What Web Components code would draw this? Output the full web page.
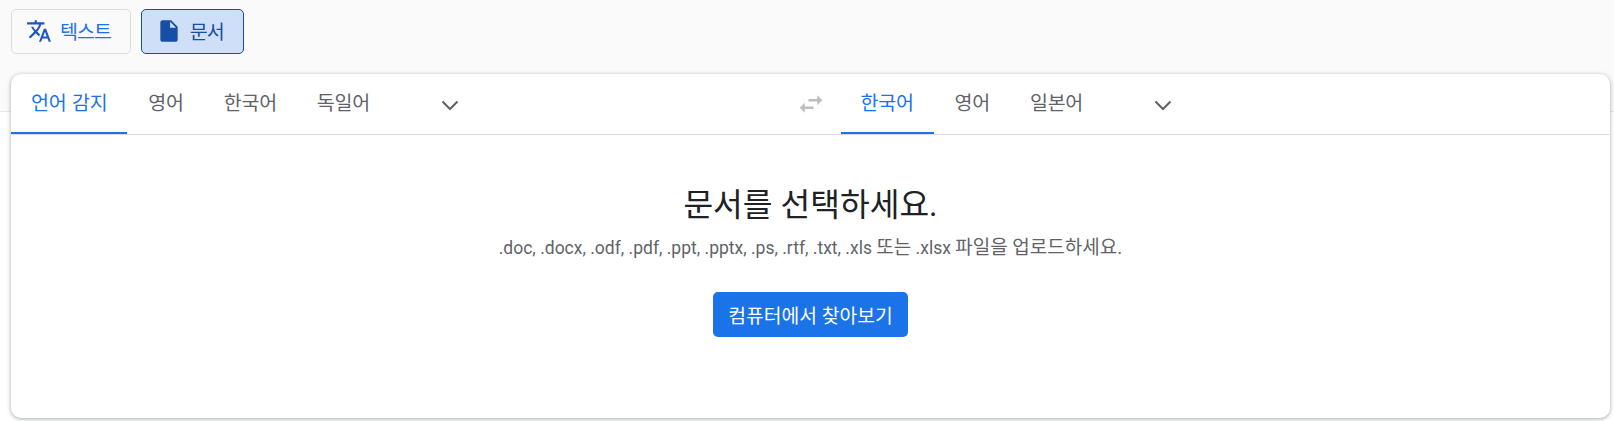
<!DOCTYPE html>
<html lang="ko">
<head>
<meta charset="utf-8">
<title>번역</title>
<style>
  html, body { margin: 0; height: 100%; background: #fff; }
  body { font-family: Roboto, "Noto Sans CJK KR", sans-serif; overflow: hidden; }
</style>
</head>
<body>
<mode-bar>
  <mode-button icon="translate">텍스트</mode-button>
  <mode-button icon="doc" active>문서</mode-button>
</mode-bar>
<translate-card>
  <lang-tabs slot="source">
    <lang-tab active>언어 감지</lang-tab>
    <lang-tab>영어</lang-tab>
    <lang-tab>한국어</lang-tab>
    <lang-tab>독일어</lang-tab>
  </lang-tabs>
  <lang-tabs slot="target">
    <lang-tab active>한국어</lang-tab>
    <lang-tab>영어</lang-tab>
    <lang-tab>일본어</lang-tab>
  </lang-tabs>
  <doc-picker></doc-picker>
</translate-card>

<script>
(function () {
  const ICONS = {
    translate: '<svg width="26" height="26" viewBox="0 0 24 24" fill="currentColor"><path d="M12.87 15.07l-2.54-2.51.03-.03c1.74-1.94 2.98-4.17 3.71-6.53H17V4h-7V2H8v2H1v1.99h11.17C11.5 7.92 10.44 9.75 9 11.35 8.07 10.32 7.3 9.19 6.69 8h-2c.73 1.63 1.73 3.17 2.98 4.56l-5.09 5.02L4 19l5-5 3.11 3.11.76-2.04zM18.5 10h-2L12 22h2l1.12-3h4.75L21 22h2l-4.5-12zm-2.62 7l1.62-4.33L19.12 17h-3.24z"/></svg>',
    doc: '<svg width="26" height="26" viewBox="0 0 24 24" fill="currentColor"><path d="M6 2c-1.1 0-2 .9-2 2v16c0 1.1.9 2 2 2h12c1.1 0 2-.9 2-2V8l-6-6H6zm7 7V3.5L18.5 9H13z"/></svg>'
  };

  class ModeBar extends HTMLElement {
    connectedCallback() {
      this.attachShadow({ mode: 'open' }).innerHTML = `
        <style>
          :host { display: flex; gap: 10px; height: 112px; box-sizing: border-box; padding: 9px 11px 0;
                  background: #fafafa; border-bottom: 1px solid #e8e8e8; align-items: flex-start; }
        </style>
        <slot></slot>`;
    }
  }

  class ModeButton extends HTMLElement {
    connectedCallback() {
      const active = this.hasAttribute('active');
      this.attachShadow({ mode: 'open' }).innerHTML = `
        <style>
          :host { display: flex; align-items: center; gap: 8px; height: 45px; box-sizing: border-box;
                  padding: 0 19px 2px 14px; border-radius: 5px; font-size: 19.5px; letter-spacing: -1px;
                  border: 1px solid ${active ? '#174ea6' : '#dadce0'};
                  background: ${active ? '#cfdff8' : '#fafafa'};
                  color: ${active ? '#174ea6' : '#1a73e8'}; }
          svg { display: block; }
          .icon { color: #1a56c4; }
          :host([active]) .icon { color: #174ea6; }
        </style>
        <span class="icon">${ICONS[this.getAttribute('icon')]}</span>
        <slot></slot>`;
    }
  }

  class TranslateCard extends HTMLElement {
    connectedCallback() {
      this.attachShadow({ mode: 'open' }).innerHTML = `
        <style>
          :host { display: block; position: absolute; left: 11px; top: 74px; width: 1599px; height: 344px;
                  background: #fff; border-radius: 10px;
                  box-shadow: 0 1px 4px 0 rgba(60,64,67,.45); }
          .head { display: grid; grid-template-columns: 1fr 60px 1fr; height: 61px; box-sizing: border-box;
                  border-bottom: 1px solid #dadce0; }
          .swap { display: flex; align-items: center; justify-content: center; color: #bdbdbd; padding-bottom: 1px; }
        </style>
        <div class="head">
          <slot name="source"></slot>
          <div class="swap">
            <svg width="30" height="30" viewBox="0 0 24 24" fill="currentColor"><path d="M6.99 11L3 15l3.99 4v-3H14v-2H6.99v-3zM21 9l-3.99-4v3H10v2h7.01v3L21 9z"/></svg>
          </div>
          <slot name="target"></slot>
        </div>
        <slot></slot>`;
    }
  }

  class LangTabs extends HTMLElement {
    connectedCallback() {
      this.attachShadow({ mode: 'open' }).innerHTML = `
        <style>
          :host { display: flex; height: 60px; }
          .more { display: flex; align-items: center; margin-left: 52px; color: #5f6368; padding-top: 3px; }
          svg { display: block; }
        </style>
        <slot></slot>
        <div class="more">
          <svg width="18" height="12" viewBox="0 0 18 12" fill="none" stroke="currentColor" stroke-width="2"><path d="M1.5 1.5L9 9l7.5-7.5"/></svg>
        </div>`;
    }
  }

  class LangTab extends HTMLElement {
    connectedCallback() {
      const active = this.hasAttribute('active');
      this.attachShadow({ mode: 'open' }).innerHTML = `
        <style>
          :host { display: flex; align-items: center; box-sizing: border-box; height: 60px;
                  padding: 0 ${active ? 20 : 19}px 3px ${active ? 20 : 21}px;
                  font-size: 19.5px; letter-spacing: -.25px; word-spacing: 1px;
                  color: ${active ? '#1a73e8' : '#5f6368'};
                  border-bottom: 2px solid ${active ? '#1a73e8' : 'transparent'}; }
        </style>
        <slot></slot>`;
    }
  }

  class DocPicker extends HTMLElement {
    connectedCallback() {
      this.attachShadow({ mode: 'open' }).innerHTML = `
        <style>
          :host { display: flex; flex-direction: column; align-items: center; padding-top: 48px; }
          h2 { margin: 0; font-size: 32.3px; font-weight: 400; line-height: 44px; color: #202124; }
          p { margin: 9px 0 0; font-size: 17.5px; line-height: 24px; color: #5f6368; }
          p span { font-size: 19px; }
          button { margin-top: 32px; width: 195px; height: 45px; border: 0; border-radius: 5px; padding: 0;
                   background: #1a73e8; color: #fff; font: inherit; font-size: 19.3px; }
        </style>
        <h2>문서를 선택하세요.</h2>
        <p>.doc, .docx, .odf, .pdf, .ppt, .pptx, .ps, .rtf, .txt, .xls <span>또는</span> .xlsx <span>파일을 업로드하세요.</span></p>
        <button>컴퓨터에서 찾아보기</button>`;
    }
  }

  customElements.define('mode-bar', ModeBar);
  customElements.define('mode-button', ModeButton);
  customElements.define('translate-card', TranslateCard);
  customElements.define('lang-tabs', LangTabs);
  customElements.define('lang-tab', LangTab);
  customElements.define('doc-picker', DocPicker);
})();
</script>
</body>
</html>
